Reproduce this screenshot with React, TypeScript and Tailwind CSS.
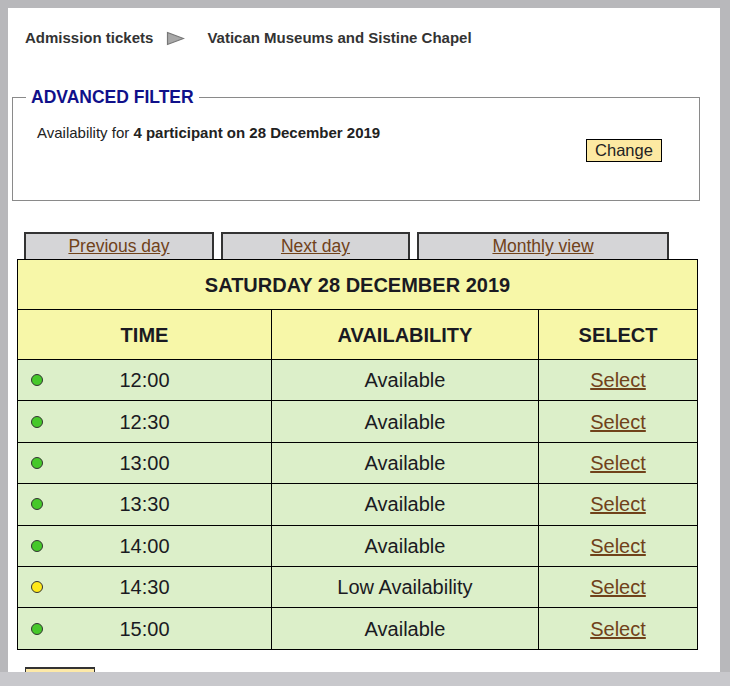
import React from 'react';

const slots: Array<{ time: string; status: string; low?: boolean }> = [
    { time: "12:00", status: "Available" },
    { time: "12:30", status: "Available" },
    { time: "13:00", status: "Available" },
    { time: "13:30", status: "Available" },
    { time: "14:00", status: "Available" },
    { time: "14:30", status: "Low Availability", low: true },
    { time: "15:00", status: "Available" },
];

const tabs = [
    { label: "Previous day", width: "w-[190px]" },
    { label: "Next day", width: "w-[189px]" },
    { label: "Monthly view", width: "w-[252px]" },
];

const Arrow = () => (
    <svg width="19" height="15" viewBox="0 0 19 15" className="ml-[13px] mr-[22px]">
        <path d="M1.5 1.5 L17.5 7.5 L1.5 13.5 Z" fill="#a8a8a8" stroke="#777" strokeWidth="1.2" />
    </svg>
);

const App = () => {
    return (
        <div className="h-[686px] w-[730px] overflow-hidden bg-[#b8b8bb] font-['Liberation_Sans',Arial,sans-serif]">
            <div className="ml-2 mt-2 h-[664px] w-[712px] overflow-hidden bg-white">
                {/* breadcrumb */}
                <div className="flex items-center pl-[17px] pt-[22px] text-[15px] font-bold leading-4 text-[#333]">
                    <span>Admission tickets</span>
                    <Arrow />
                    <span>Vatican Museums and Sistine Chapel</span>
                </div>

                {/* filter */}
                <fieldset className="ml-1 mt-[41px] h-[114px] w-[688px] border border-[#8a8a8a]">
                    <legend className="ml-[13px] px-[5px] text-[17.5px] font-bold leading-[20px] text-[#10108a]">
                        ADVANCED FILTER
                    </legend>
                    <div className="flex justify-between">
                        <p className="pl-[24px] pt-[18px] text-[15px] leading-4 text-[#222]">
                            Availability for <b>4 participant on 28 December 2019</b>
                        </p>
                        <button className="mr-[37px] mt-[32px] h-[23px] w-[76px] border border-black bg-[#fde9a2] text-[16.5px] leading-none text-[#222]">
                            Change
                        </button>
                    </div>
                </fieldset>

                {/* tabs */}
                <div className="ml-4 mt-[31px] flex gap-[7px]">
                    {tabs.map((tab) => (
                        <div
                            key={tab.label}
                            className={`${tab.width} flex h-[27px] items-center justify-center border-2 border-b-0 border-[#333] bg-[#d5d5d7] text-[17.5px]`}
                        >
                            <a href="#" className="text-[#70421a] underline">{tab.label}</a>
                        </div>
                    ))}
                </div>

                {/* schedule */}
                <table className="ml-[9px] w-[681px] border-collapse text-[20px] text-[#1a1a22]">
                    <thead>
                        <tr className="h-[50px] bg-[#f7f7a8]">
                            <th colSpan={3} className="border border-black font-bold">SATURDAY 28 DECEMBER 2019</th>
                        </tr>
                        <tr className="h-[50px] bg-[#f7f7a8]">
                            <th className="w-[254px] border border-black font-bold">TIME</th>
                            <th className="w-[267px] border border-black font-bold">AVAILABILITY</th>
                            <th className="border border-black font-bold">SELECT</th>
                        </tr>
                    </thead>
                    <tbody>
                        {slots.map((slot) => (
                            <tr key={slot.time} className="h-[41.4px] bg-[#dcefc9]">
                                <td className="relative border border-black text-center leading-6">
                                    <span
                                        className={`absolute left-[13px] top-1/2 size-[12px] -translate-y-1/2 rounded-full border border-[#333] ${slot.low ? "bg-[#ffe81a]" : "bg-[#46c82a]"}`}
                                    />
                                    {slot.time}
                                </td>
                                <td className="border border-black text-center leading-6">{slot.status}</td>
                                <td className="border border-black text-center leading-6">
                                    <a href="#" className="text-[#70421a] underline">Select</a>
                                </td>
                            </tr>
                        ))}
                    </tbody>
                </table>

                <div className="ml-[17px] mt-[17px] h-[20px] w-[70px] border-t-2 border-x border-[#333] bg-[#fde9a8]" />
            </div>
            <div className="h-[14px] w-full bg-[#c8c8cc]" />
        </div>
    );
};

export default App;
